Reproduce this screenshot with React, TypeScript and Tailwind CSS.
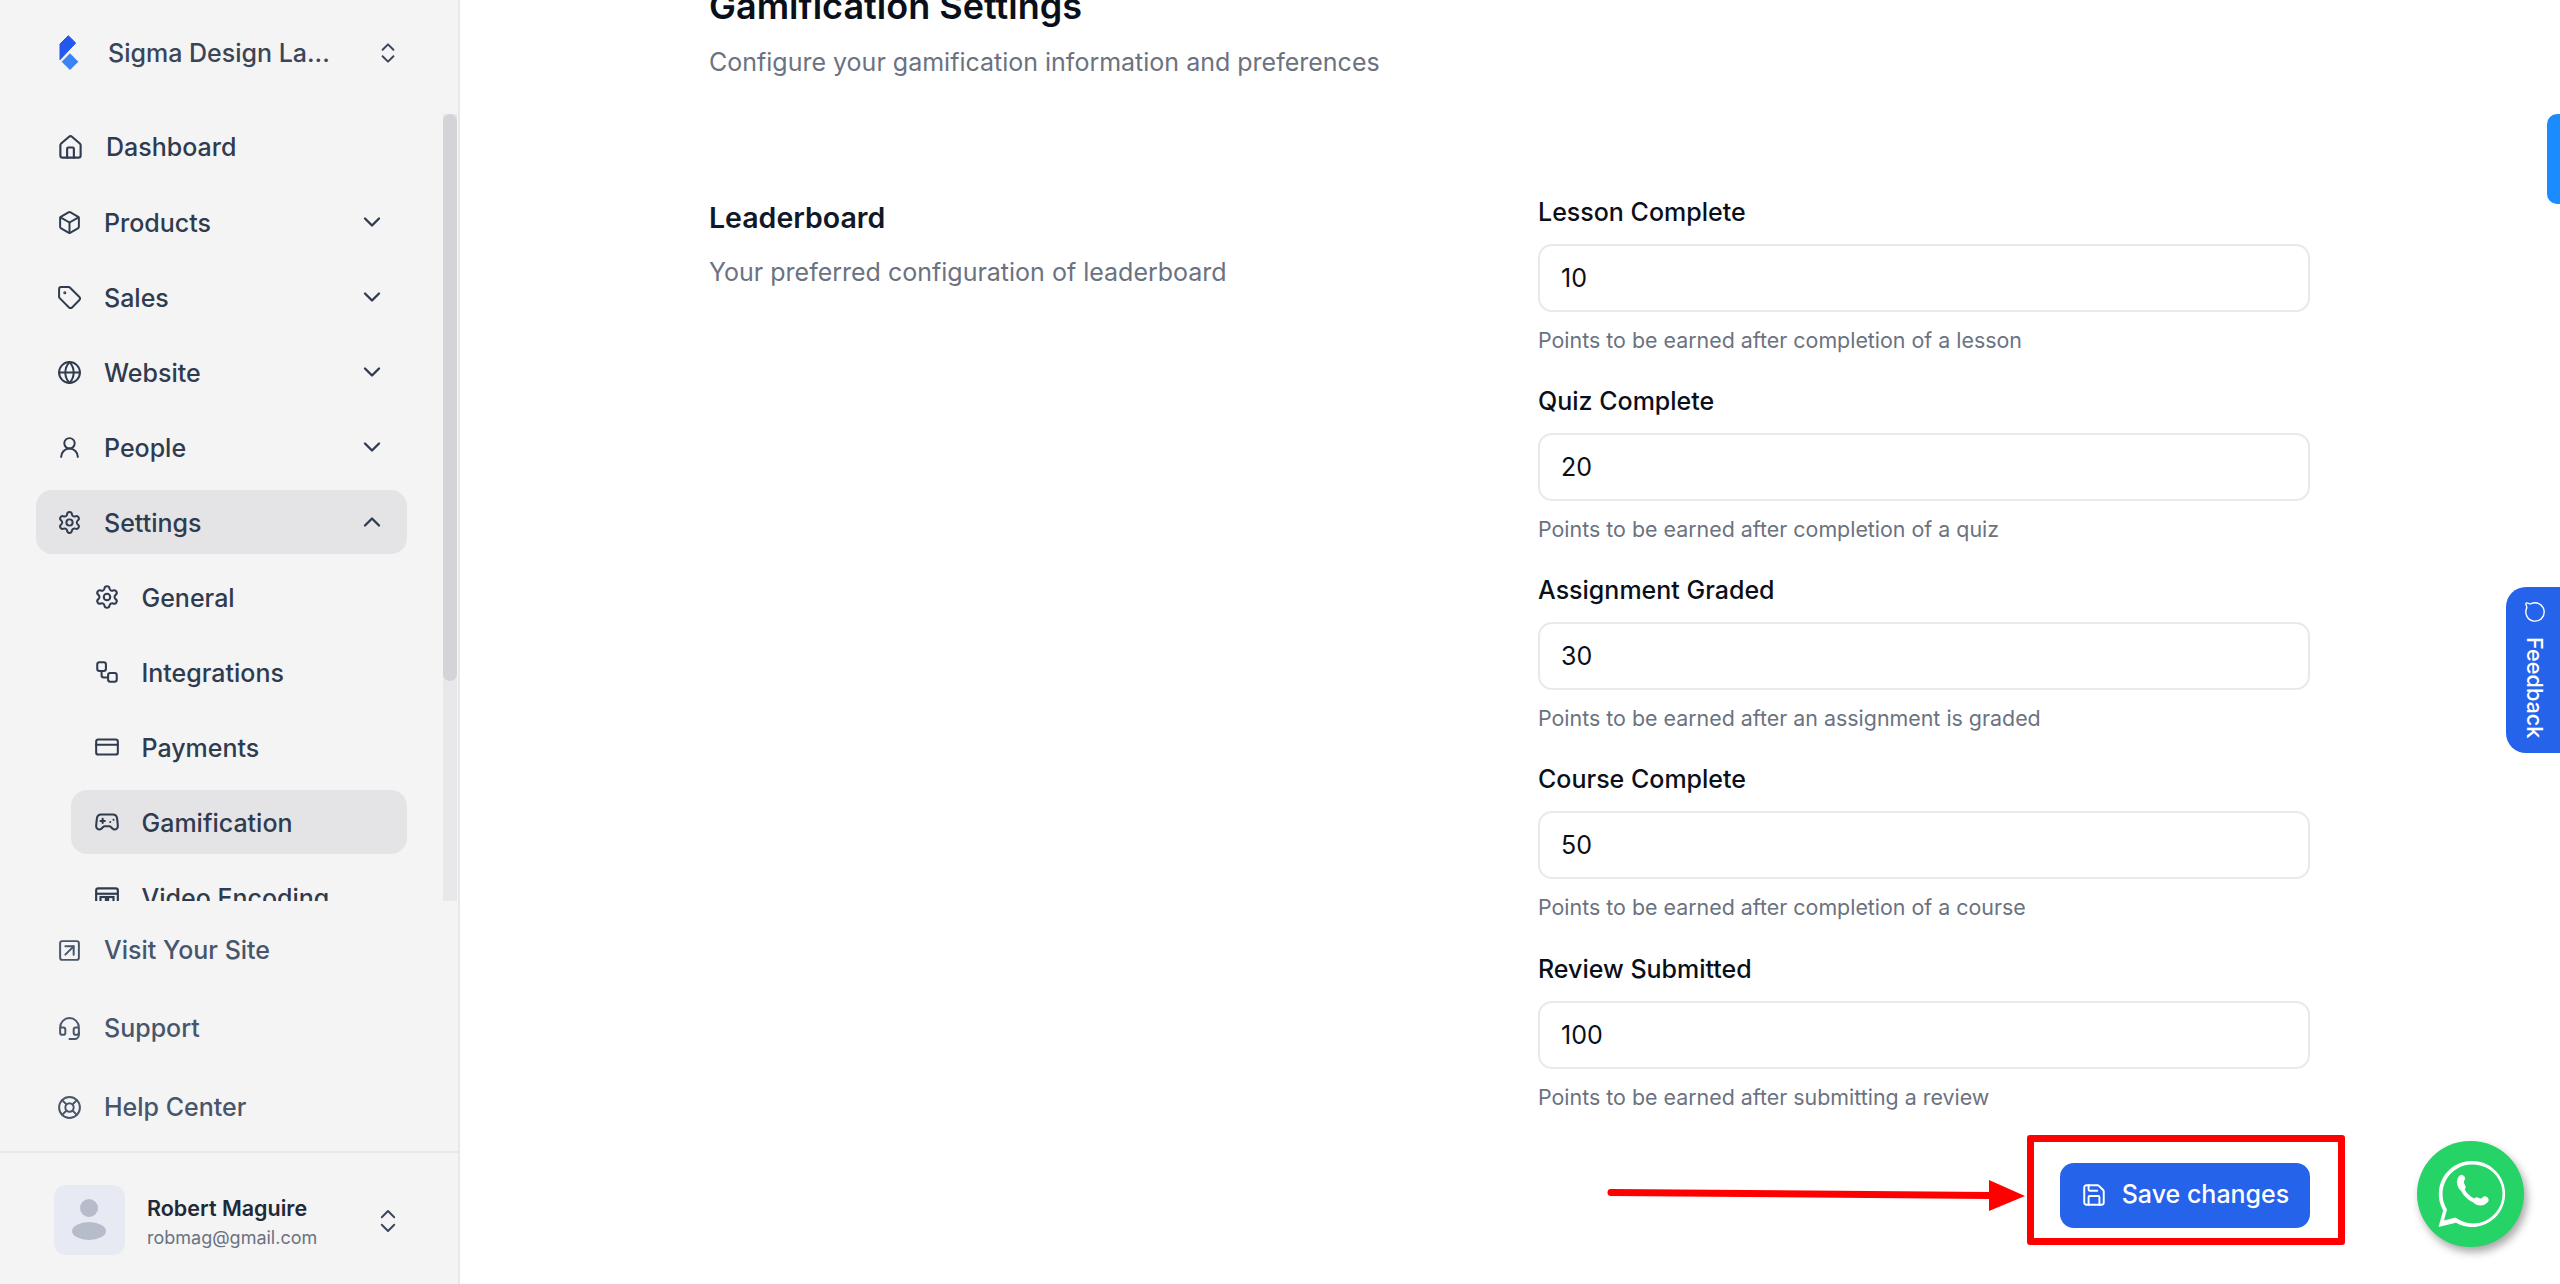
import React from "react";
import {
  Box,
  ChevronDown,
  ChevronUp,
  ChevronsUpDown,
  CreditCard,
  Gamepad2,
  Globe,
  Headset,
  House,
  LifeBuoy,
  MessageCircle,
  Save,
  Settings,
  SquareArrowUpRight,
  Tag,
  UserRound,
  Workflow,
} from "lucide-react";

const mainItems = [
  { label: "Products", icon: Box },
  { label: "Sales", icon: Tag },
  { label: "Website", icon: Globe },
  { label: "People", icon: UserRound },
];

const subItems = [
  { label: "General", icon: Settings },
  { label: "Integrations", icon: Workflow },
  { label: "Payments", icon: CreditCard },
  { label: "Gamification", icon: Gamepad2, active: true },
];

const footerItems = [
  { label: "Visit Your Site", icon: SquareArrowUpRight },
  { label: "Support", icon: Headset },
  { label: "Help Center", icon: LifeBuoy },
];

const fields = [
  { label: "Lesson Complete", value: "10", hint: "Points to be earned after completion of a lesson" },
  { label: "Quiz Complete", value: "20", hint: "Points to be earned after completion of a quiz" },
  { label: "Assignment Graded", value: "30", hint: "Points to be earned after an assignment is graded" },
  { label: "Course Complete", value: "50", hint: "Points to be earned after completion of a course" },
  { label: "Review Submitted", value: "100", hint: "Points to be earned after submitting a review" },
];

function Logo() {
  return (
    <svg viewBox="0 0 22 38" className="h-[38px] w-[22px] shrink-0">
      <path d="M10.3 1.7 17.7 9 2 25.7V10Z" fill="#2457ee" stroke="#2457ee" strokeLinejoin="round" />
      <path d="M12 19.3 20.3 27.7 12 36 3.7 27.7Z" fill="#3b82f6" />
    </svg>
  );
}

function WhatsappMark() {
  return (
    <svg viewBox="0 0 107 106" className="h-[106px] w-[107px]">
      <path
        fill="#fff"
        fillRule="evenodd"
        d="M55 20a33 33 0 1 1-16 61.8L21.5 86l4.6-16.6A33 33 0 0 1 55 20Zm0 3.6a29.4 29.4 0 0 0-25 45l-3 11 11.6-3A29.4 29.4 0 1 0 55 23.6Z"
      />
      <path d="M44.5 41c-.8 10 9 20.5 20 19.5" fill="none" stroke="#fff" strokeWidth="4" />
      <path d="M44.5 37.5c-1.5 2-1.5 5 .5 8.5" fill="none" stroke="#fff" strokeWidth="7" strokeLinecap="round" />
      <path d="M60 60c3 1.5 6 1 8-1" fill="none" stroke="#fff" strokeWidth="7" strokeLinecap="round" />
    </svg>
  );
}

function Sidebar() {
  return (
    <aside className="flex h-[1284px] w-[460px] shrink-0 flex-col border-r-2 border-[#e8e8ea] bg-[#f4f4f5] text-[#2f3b4f]">
      <div className="flex h-[114px] shrink-0 items-start pl-[58px] pr-[57px] pt-[34px]">
        <Logo />
        <span className="ml-[28px] flex-1 text-[25px] font-medium leading-[38px] text-[#3a4557]">Sigma Design La...</span>
        <ChevronsUpDown size={26} strokeWidth={1.8} className="mt-[6px] text-[#3a4557]" />
      </div>

      <div className="flex h-[787px] shrink-0 overflow-hidden">
        <nav className="flex-1 pl-[36px] pr-[36px] pt-[1px]">
          <div className="flex h-[64px] items-center pl-[21px]">
            <House size={27} strokeWidth={1.9} className="shrink-0" />
            <span className="ml-[22px] pt-[2px] text-[25px] font-medium">Dashboard</span>
          </div>
          {mainItems.map((item) => (
            <div key={item.label} className="mt-[11px] flex h-[64px] items-center pl-[21px] pr-[21px]">
              <item.icon size={25} strokeWidth={1.9} className="shrink-0" />
              <span className="ml-[22px] flex-1 pt-[3px] text-[25px] font-medium">{item.label}</span>
              <ChevronDown size={28} strokeWidth={2} />
            </div>
          ))}
          <div className="mt-[11px] flex h-[64px] items-center rounded-[16px] bg-[#e4e4e7] pl-[21px] pr-[21px]">
            <Settings size={25} strokeWidth={1.9} className="shrink-0" />
            <span className="ml-[22px] flex-1 pt-[3px] text-[25px] font-medium">Settings</span>
            <ChevronUp size={28} strokeWidth={2} />
          </div>
          <div className="ml-[35px]">
            {subItems.map((item) => (
              <div
                key={item.label}
                className={`mt-[11px] flex h-[64px] items-center rounded-[16px] pl-[23px] ${item.active ? "bg-[#e4e4e7]" : ""}`}
              >
                <item.icon size={26} strokeWidth={1.9} className="shrink-0" />
                <span className="ml-[21.5px] pt-[3px] text-[25px] font-medium">{item.label}</span>
              </div>
            ))}
            <div className="mt-[11px] flex h-[64px] items-center pl-[23px]">
              <svg viewBox="0 0 24 24" fill="none" stroke="currentColor" strokeWidth="2" className="h-[26px] w-[26px] shrink-0">
                <rect x="2" y="4" width="20" height="16" rx="2" />
                <path d="M2 9h20" />
                <rect x="6" y="12" width="5" height="5" />
                <rect x="13" y="12" width="5" height="5" />
              </svg>
              <span className="ml-[21.5px] pt-[3px] text-[25px] font-medium">Video Encoding</span>
            </div>
          </div>
        </nav>
        <div className="mr-px h-full w-[14px] shrink-0 bg-[#e8e8ea]">
          <div className="h-[567px] w-full rounded-full bg-[#d4d4d8]" />
        </div>
      </div>

      <div className="flex h-[250px] shrink-0 flex-col pl-[57px] pt-[10px]">
        {footerItems.map((item) => (
          <div key={item.label} className="flex h-[78.5px] items-center text-[#47566b]">
            <item.icon size={25} strokeWidth={1.9} className="shrink-0" />
            <span className="ml-[22px] text-[25px] font-medium">{item.label}</span>
          </div>
        ))}
      </div>

      <div className="flex flex-1 items-start border-t-2 border-[#e8e8ea] pl-[54px] pt-[31.5px]">
        <div className="flex h-[70px] w-[71px] shrink-0 items-center justify-center rounded-[12px] bg-[#e8eaf3]">
          <svg viewBox="0 0 71 70" className="h-[70px] w-[71px]">
            <ellipse cx="35" cy="23" rx="9" ry="9" fill="#b6bcc9" />
            <ellipse cx="35" cy="46" rx="17" ry="9" fill="#b6bcc9" />
          </svg>
        </div>
        <div className="ml-[22px] flex-1 pt-[8.5px]">
          <div className="text-[21.5px] font-semibold leading-[30px] text-[#1f2937]">Robert Maguire</div>
          <div className="mt-[1px] text-[18px] leading-[28px] text-[#6b7280]">robmag@gmail.com</div>
        </div>
        <ChevronsUpDown size={30} strokeWidth={1.5} className="mr-[55px] mt-[21px] text-[#3a4557]" />
      </div>
    </aside>
  );
}

function Field({ label, value, hint }: { label: string; value: string; hint: string }) {
  return (
    <div>
      <label className="block text-[25px] font-medium leading-[30px] text-[#0b0f19]">{label}</label>
      <input
        readOnly
        defaultValue={value}
        className="mt-[17px] block h-[68px] w-full rounded-[14px] border-2 border-[#e8e9ec] bg-white px-[21px] text-[25px] text-[#0b0f19] outline-none"
      />
      <p className="mt-[16px] text-[21.4px] leading-[24px] text-[#6b7280]">{hint}</p>
    </div>
  );
}

export default function App() {
  return (
    <div className="relative flex h-[1284px] w-[2560px] overflow-hidden bg-white font-['Inter',sans-serif]">
      <Sidebar />

      <main className="min-w-0 flex-1 pl-[249px]">
        <div className="-mt-[16px]">
          <h1 className="text-[36px] font-semibold leading-[44px] text-[#0b0f19]">Gamification Settings</h1>
          <p className="mt-[15.5px] text-[25px] leading-[36px] text-[#6b7280]">Configure your gamification information and preferences</p>
        </div>

        <div className="mt-[118px] grid grid-cols-[829px_772px]">
          <div className="pt-[2px]">
            <h2 className="text-[28.5px] font-semibold leading-[36px] text-[#111827]">Leaderboard</h2>
            <p className="mt-[18px] text-[25px] leading-[36px] text-[#6b7280]">Your preferred configuration of leaderboard</p>
          </div>
          <div className="-mt-[1px]">
            <div className="flex flex-col gap-[34.3px]">
              {fields.map((f) => (
                <Field key={f.label} {...f} />
              ))}
            </div>
            <div className="mt-[54px] flex justify-end">
              <button className="flex h-[65px] w-[250px] items-center justify-center gap-[15px] rounded-[14px] bg-[#2563eb] text-[25px] font-medium text-white">
                <Save size={26} strokeWidth={1.8} />
                Save changes
              </button>
            </div>
          </div>
        </div>

        <p className="mt-[53px] text-[24.5px] font-semibold leading-[30px] text-[#6b7280]">Points</p>
      </main>

      {/* screenshot annotation */}
      <div className="absolute left-[2027px] top-[1135px] h-[110px] w-[318px] rounded-[3px] border-[7px] border-[#ff0000]" />
      <svg viewBox="0 0 420 36" className="absolute left-[1606px] top-[1178px] h-[36px] w-[420px]">
        <path d="M5 14.5 385 17.5" stroke="#ff0000" strokeWidth="7" strokeLinecap="round" />
        <path d="M383 2 419 18 383 33Z" fill="#ff0000" />
      </svg>

      <div className="absolute right-0 top-[114px] h-[90px] w-[13px] rounded-l-[10px] bg-[#1a8cff]" />

      <div className="absolute right-0 top-[587px] flex h-[166px] w-[54px] flex-col items-center rounded-l-[20px] bg-[#2563eb] pl-[3px] pt-[14px] text-white">
        <MessageCircle size={22} strokeWidth={1.5} className="rotate-90" />
        <span className="mt-[14px] text-[21.7px] font-medium leading-[26px] [writing-mode:vertical-rl]">Feedback</span>
      </div>

      <div className="absolute left-[2417px] top-[1141px] h-[106px] w-[107px] rounded-full bg-[#25d366] shadow-[3px_5px_8px_rgba(0,0,0,0.35)]">
        <WhatsappMark />
      </div>
    </div>
  );
}
